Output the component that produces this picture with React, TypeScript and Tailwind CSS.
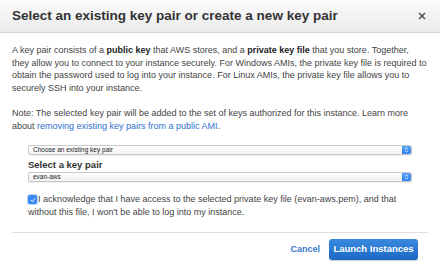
import React from 'react'

function MacSelect({ value }: { value: string }) {
  return (
    <div className="flex h-[10px] w-[384px] items-stretch rounded-[2px] border border-[#c8c8c8] bg-gradient-to-b from-white to-[#f1f1f1] shadow-[0_1px_0_rgba(0,0,0,0.06)]">
      <span className="flex-1 pl-[4px] text-[6.5px] leading-[8px] text-[#222]">{value}</span>
      <span className="flex w-[9px] items-center justify-center rounded-r-[2px] bg-gradient-to-b from-[#5aa2f8] to-[#2a7ff0]">
        <svg width="5" height="6" viewBox="0 0 5 6" fill="none" stroke="white" strokeWidth="0.8">
          <path d="M1 2.3 L2.5 1 L4 2.3" />
          <path d="M1 3.7 L2.5 5 L4 3.7" />
        </svg>
      </span>
    </div>
  )
}

export default function App() {
  return (
    <div className="h-[265px] w-[440px] overflow-hidden bg-white font-['Liberation_Sans',Arial,sans-serif]">
      {/* Header */}
      <div className="flex h-[33px] items-center justify-between border-b border-[#d6d6d6] bg-gradient-to-b from-[#fbfbfb] to-[#ebebeb] pl-[12px] pr-[14px]">
        <h2 className="text-[13.5px] font-bold text-[#333]">Select an existing key pair or create a new key pair</h2>
        <svg width="8" height="8" viewBox="0 0 8 8" stroke="#444" strokeWidth="1.4">
          <path d="M1 1 L7 7 M7 1 L1 7" />
        </svg>
      </div>

      {/* Body */}
      <div className="px-[12px] pt-[11px] text-[9px] leading-[12.5px] text-[#444]">
        <p>
          A key pair consists of a <b className="text-[#222]">public key</b> that AWS stores, and a{' '}
          <b className="text-[#222]">private key file</b> that you store. Together, they allow you to connect to your
          instance securely. For Windows AMIs, the private key file is required to obtain the password used to log
          into your instance. For Linux AMIs, the private key file allows you to securely SSH into your instance.
        </p>
        <p className="mt-[13px]">
          Note: The selected key pair will be added to the set of keys authorized for this instance. Learn more about{' '}
          <span className="text-[#2f6fce]">removing existing key pairs from a public AMI</span>.
        </p>

        <div className="mt-[13px] pl-[16px]">
          <MacSelect value="Choose an existing key pair" />
          <div className="mt-[2px] text-[9.5px] font-bold leading-[15px] text-[#333]">Select a key pair</div>
          <MacSelect value="evan-aws" />
          <div className="mt-[11px] flex w-[380px] items-start">
            <span className="mt-[2px] mr-[1px] flex h-[9px] w-[9px] shrink-0 items-center justify-center rounded-[2px] bg-[#3d8bf2] shadow-[0_0_0_1px_rgba(120,170,240,0.5)]">
              <svg width="6" height="6" viewBox="0 0 6 6" fill="none" stroke="white" strokeWidth="1">
                <path d="M1 3.2 L2.4 4.5 L5 1.5" />
              </svg>
            </span>
            <p className="-ml-[10px] indent-[10px]">
              I acknowledge that I have access to the selected private key file (evan-aws.pem), and that without this
              file, I won't be able to log into my instance.
            </p>
          </div>
        </div>

        <div className="mt-[14px] border-t border-[#dedede]" />
        <div className="flex items-center justify-end gap-[9px] pt-[6px] pr-[10px]">
          <span className="text-[9px] font-bold text-[#3b78cc]">Cancel</span>
          <button className="h-[21px] w-[89px] rounded-[3px] bg-gradient-to-b from-[#3a8ae0] to-[#1c67c4] text-[9.5px] font-bold text-white shadow-[0_1px_1px_rgba(0,0,0,0.2)]">
            Launch Instances
          </button>
        </div>
      </div>
    </div>
  )
}
